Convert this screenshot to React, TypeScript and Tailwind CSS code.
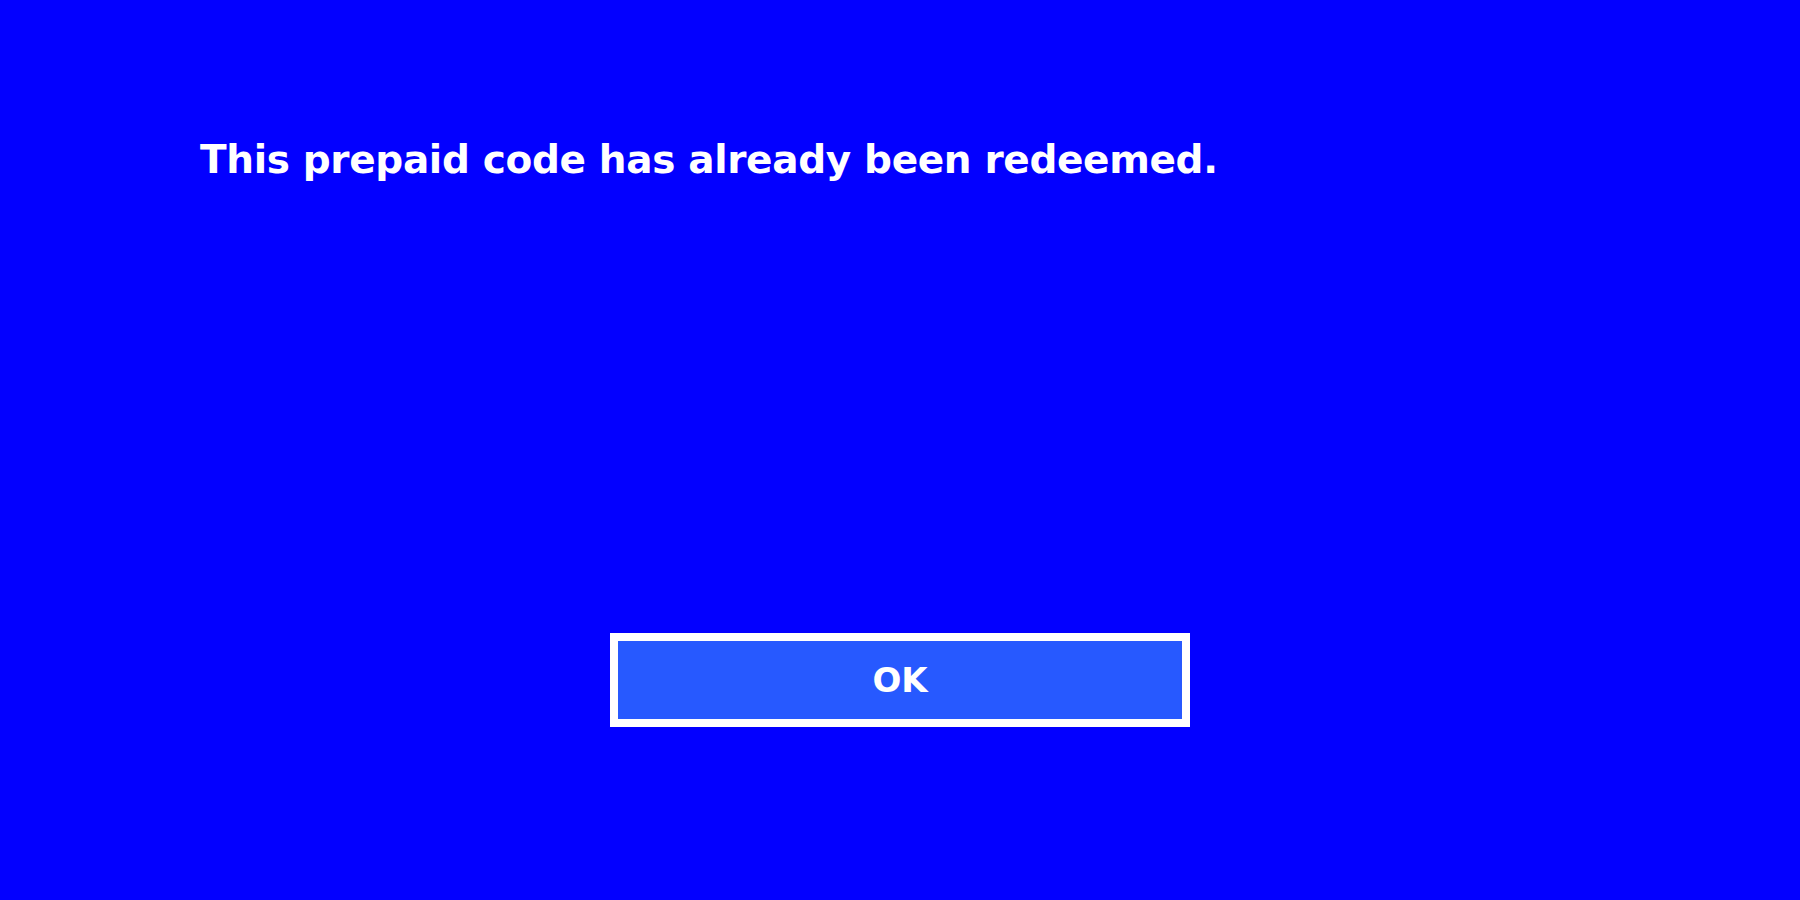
export default function App() {
  return (
    <div className="flex h-[900px] w-[1800px] flex-col bg-[#0300ff] font-['DejaVu_Sans',sans-serif] text-white">
      <p className="pl-[200px] pt-[130px] text-[39px] font-bold leading-[60px] tracking-[-0.35px]">
        This prepaid code has already been redeemed.
      </p>
      <div className="flex justify-center pt-[443px]">
        <button
          type="button"
          className="flex h-[94px] w-[580px] items-center justify-center border-[8px] border-white bg-[#2759ff] text-[34px] font-bold text-white"
        >
          OK
        </button>
      </div>
    </div>
  );
}
